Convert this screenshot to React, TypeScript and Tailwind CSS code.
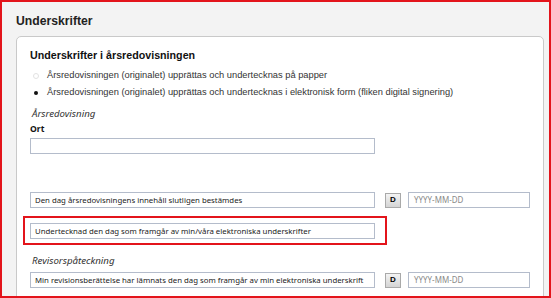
import React from 'react';

const segoe = { fontFamily: '"Noto Sans", "Open Sans", sans-serif' };

const TextBox: React.FC<{ value?: string; className?: string }> = ({ value, className }) => (
    <div
        className={`h-[16px] w-[345px] border border-[#b4bccb] bg-white pl-[4px] text-[7.8px] leading-[14px] text-[#222] whitespace-nowrap overflow-hidden ${className ?? ''}`}
        style={segoe}
    >
        {value}
    </div>
);

const DateField: React.FC = () => (
    <div className="flex items-center">
        <div className="ml-[10px] flex h-[15px] w-[16px] items-center justify-center border border-[#a9a9a9] bg-gradient-to-b from-[#f4f4f4] to-[#d4d4d4] text-[8px] font-bold text-black font-['Liberation_Sans',sans-serif]">
            D
        </div>
        <div
            className="ml-[7px] h-[16px] w-[122px] border border-[#b4bccb] bg-white pl-[5px] text-[8px] leading-[14px] text-[#8a8a8a]"
            style={segoe}
        >
            YYYY-MM-DD
        </div>
    </div>
);

export default function App() {
    return (
        <div className="w-[551px] h-[298px] overflow-hidden border-2 border-[#e3141b] bg-[#f3f3f3] font-['Liberation_Sans',Arial,sans-serif] text-[#1e1e1e]">
            <h1 className="pl-[14px] pt-[11px] text-[12.2px] font-bold leading-[16px] text-[#222]">Underskrifter</h1>

            <div className="ml-[14px] mr-[5px] mt-[7px] h-[300px] rounded-[5px] border border-[#c9c9c9] bg-white pl-[13px] pt-[10px]">
                <h2 className="text-[10.7px] font-bold leading-[16px] text-[#111]">Underskrifter i årsredovisningen</h2>

                <div className="mt-[4px] flex flex-col text-[9.3px] leading-[17px] text-[#333]">
                    <label className="flex items-center">
                        <span className="ml-[3px] mr-[8px] h-[6px] w-[6px] rounded-full border border-[#e2e2e2] bg-white" />
                        Årsredovisningen (originalet) upprättas och undertecknas på papper
                    </label>
                    <label className="flex items-center">
                        <span className="ml-[4px] mr-[9px] h-[4px] w-[4px] rounded-full bg-[#111]" />
                        Årsredovisningen (originalet) upprättas och undertecknas i elektronisk form (fliken digital signering)
                    </label>
                </div>

                <div className="mt-[5px] pl-[2px] text-[9.7px] italic leading-[16px] text-[#333]" style={segoe}>
                    Årsredovisning
                </div>
                <div className="text-[8.6px] font-bold leading-[14px] text-[#111]" style={segoe}>
                    Ort
                </div>
                <TextBox className="mt-[2px]" />

                <div className="mt-[38px] flex items-center">
                    <TextBox value="Den dag årsredovisningens innehåll slutligen bestämdes" />
                    <DateField />
                </div>

                <div className="-ml-[7px] mt-[8px] w-[364px] border-2 border-[#e3141b] pl-[5px] pt-[5px] pb-[4px]">
                    <TextBox value="Undertecknad den dag som framgår av min/våra elektroniska underskrifter" />
                </div>

                <div className="mt-[8px] pl-[2px] text-[9.7px] italic leading-[16px] text-[#333]" style={segoe}>
                    Revisorspåteckning
                </div>
                <div className="mt-[3px] flex items-center">
                    <TextBox value="Min revisionsberättelse har lämnats den dag som framgår av min elektroniska underskrift" />
                    <DateField />
                </div>
            </div>
        </div>
    );
}
